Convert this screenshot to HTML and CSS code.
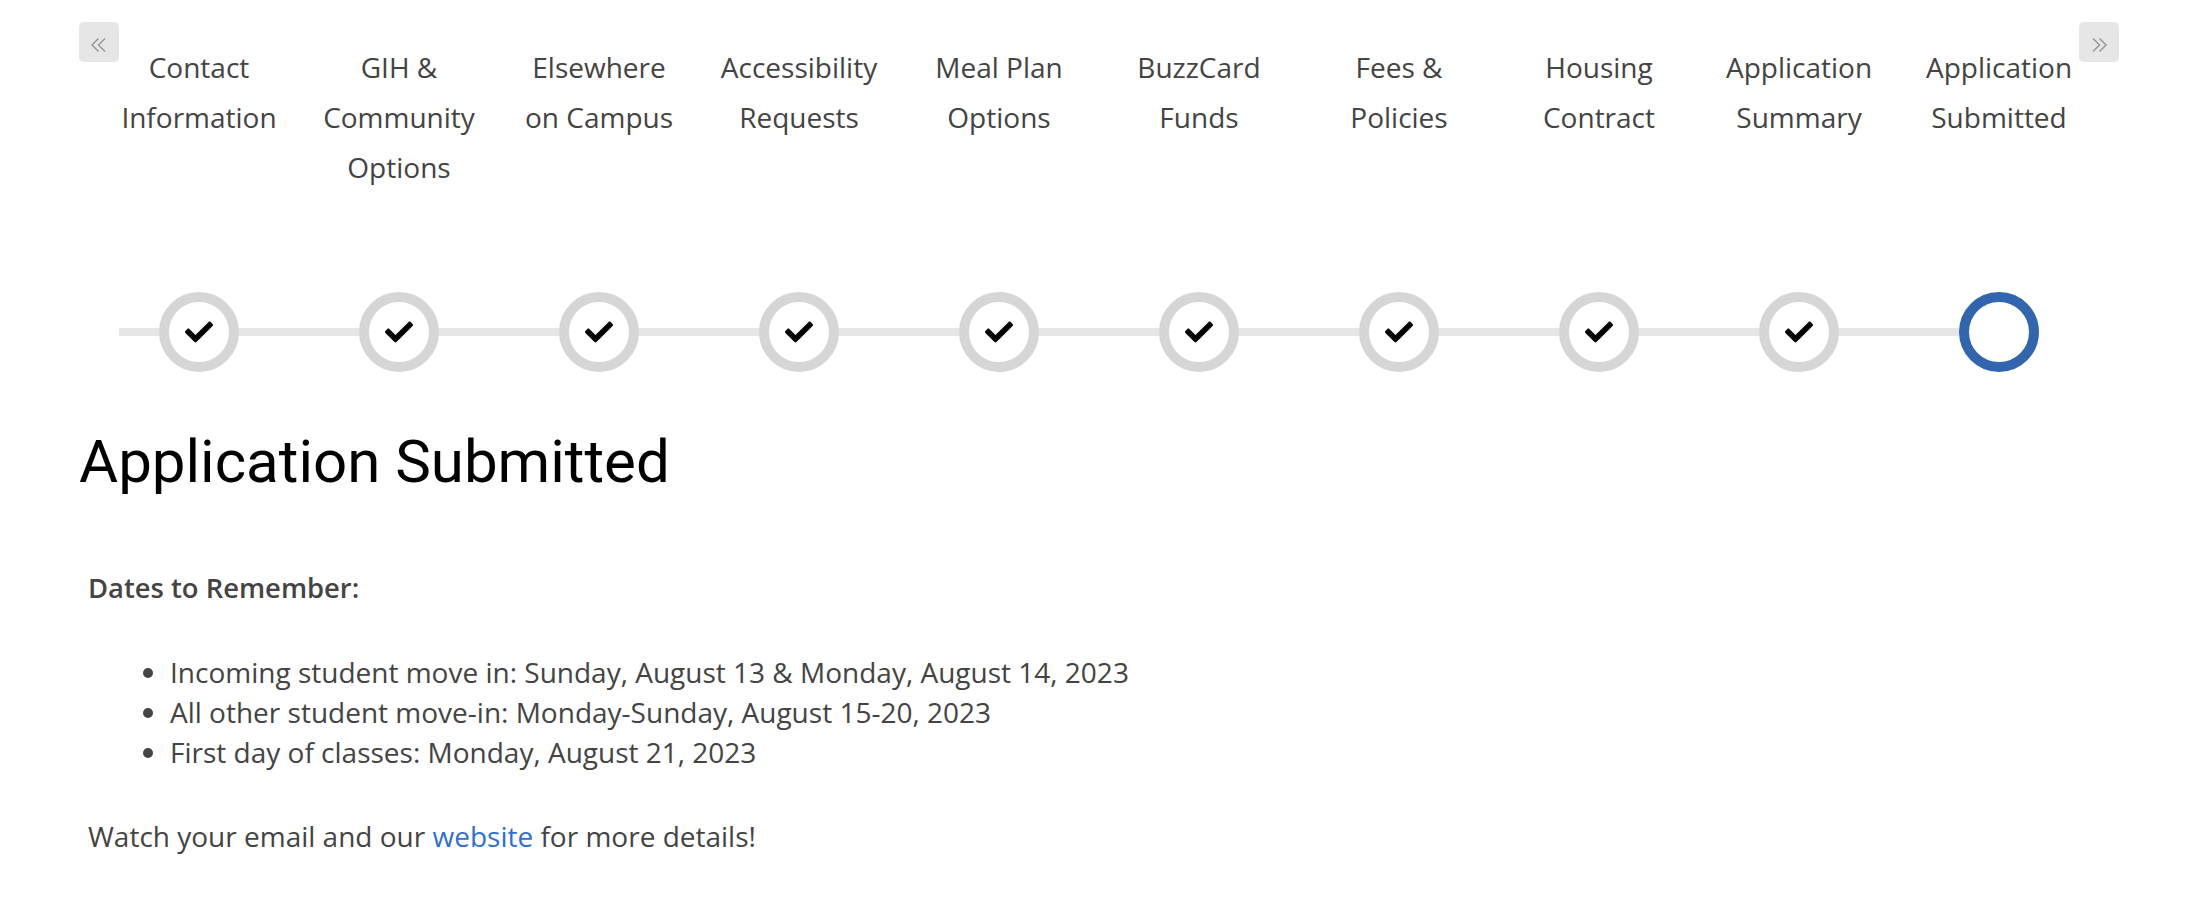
FILE: index.html
```html
<!DOCTYPE html>
<html lang="en">
<head>
  <meta charset="UTF-8">
  <meta name="viewport" content="width=device-width, initial-scale=1.0">
  <link rel="stylesheet" href="styles.css">
</head>
<body>
  <div class="stepper">
    <button class="nav-btn" aria-label="Previous">
      <svg width="18" height="16" viewBox="0 0 18 16"><polyline points="8.5,1.5 2,8 8.5,14.5" /><polyline points="15,1.5 8.5,8 15,14.5" /></svg>
    </button>
    <div class="steps-viewport">
      <div class="steps">
        <div class="step done">
          <div class="step-label">Contact Information</div>
          <div class="step-circle"><svg class="check" viewBox="0 0 512 512"><path d="M173.9 439.4l-166.4-166.4c-10-10-10-26.2 0-36.2l36.2-36.2c10-10 26.2-10 36.2 0L192 312.7 432.1 72.6c10-10 26.2-10 36.2 0l36.2 36.2c10 10 10 26.2 0 36.2l-294.4 294.4c-10 10-26.2 10-36.2 0z"/></svg></div>
        </div>
        <div class="step done">
          <div class="step-label">GIH &amp; Community Options</div>
          <div class="step-circle"><svg class="check" viewBox="0 0 512 512"><path d="M173.9 439.4l-166.4-166.4c-10-10-10-26.2 0-36.2l36.2-36.2c10-10 26.2-10 36.2 0L192 312.7 432.1 72.6c10-10 26.2-10 36.2 0l36.2 36.2c10 10 10 26.2 0 36.2l-294.4 294.4c-10 10-26.2 10-36.2 0z"/></svg></div>
        </div>
        <div class="step done">
          <div class="step-label">Elsewhere on Campus</div>
          <div class="step-circle"><svg class="check" viewBox="0 0 512 512"><path d="M173.9 439.4l-166.4-166.4c-10-10-10-26.2 0-36.2l36.2-36.2c10-10 26.2-10 36.2 0L192 312.7 432.1 72.6c10-10 26.2-10 36.2 0l36.2 36.2c10 10 10 26.2 0 36.2l-294.4 294.4c-10 10-26.2 10-36.2 0z"/></svg></div>
        </div>
        <div class="step done">
          <div class="step-label">Accessibility Requests</div>
          <div class="step-circle"><svg class="check" viewBox="0 0 512 512"><path d="M173.9 439.4l-166.4-166.4c-10-10-10-26.2 0-36.2l36.2-36.2c10-10 26.2-10 36.2 0L192 312.7 432.1 72.6c10-10 26.2-10 36.2 0l36.2 36.2c10 10 10 26.2 0 36.2l-294.4 294.4c-10 10-26.2 10-36.2 0z"/></svg></div>
        </div>
        <div class="step done">
          <div class="step-label">Meal Plan Options</div>
          <div class="step-circle"><svg class="check" viewBox="0 0 512 512"><path d="M173.9 439.4l-166.4-166.4c-10-10-10-26.2 0-36.2l36.2-36.2c10-10 26.2-10 36.2 0L192 312.7 432.1 72.6c10-10 26.2-10 36.2 0l36.2 36.2c10 10 10 26.2 0 36.2l-294.4 294.4c-10 10-26.2 10-36.2 0z"/></svg></div>
        </div>
        <div class="step done">
          <div class="step-label">BuzzCard Funds</div>
          <div class="step-circle"><svg class="check" viewBox="0 0 512 512"><path d="M173.9 439.4l-166.4-166.4c-10-10-10-26.2 0-36.2l36.2-36.2c10-10 26.2-10 36.2 0L192 312.7 432.1 72.6c10-10 26.2-10 36.2 0l36.2 36.2c10 10 10 26.2 0 36.2l-294.4 294.4c-10 10-26.2 10-36.2 0z"/></svg></div>
        </div>
        <div class="step done">
          <div class="step-label">Fees &amp; Policies</div>
          <div class="step-circle"><svg class="check" viewBox="0 0 512 512"><path d="M173.9 439.4l-166.4-166.4c-10-10-10-26.2 0-36.2l36.2-36.2c10-10 26.2-10 36.2 0L192 312.7 432.1 72.6c10-10 26.2-10 36.2 0l36.2 36.2c10 10 10 26.2 0 36.2l-294.4 294.4c-10 10-26.2 10-36.2 0z"/></svg></div>
        </div>
        <div class="step done">
          <div class="step-label">Housing Contract</div>
          <div class="step-circle"><svg class="check" viewBox="0 0 512 512"><path d="M173.9 439.4l-166.4-166.4c-10-10-10-26.2 0-36.2l36.2-36.2c10-10 26.2-10 36.2 0L192 312.7 432.1 72.6c10-10 26.2-10 36.2 0l36.2 36.2c10 10 10 26.2 0 36.2l-294.4 294.4c-10 10-26.2 10-36.2 0z"/></svg></div>
        </div>
        <div class="step done">
          <div class="step-label">Application Summary</div>
          <div class="step-circle"><svg class="check" viewBox="0 0 512 512"><path d="M173.9 439.4l-166.4-166.4c-10-10-10-26.2 0-36.2l36.2-36.2c10-10 26.2-10 36.2 0L192 312.7 432.1 72.6c10-10 26.2-10 36.2 0l36.2 36.2c10 10 10 26.2 0 36.2l-294.4 294.4c-10 10-26.2 10-36.2 0z"/></svg></div>
        </div>
        <div class="step current">
          <div class="step-label">Application Submitted</div>
          <div class="step-circle"></div>
        </div>
      </div>
    </div>
    <button class="nav-btn" aria-label="Next">
      <svg width="18" height="16" viewBox="0 0 18 16"><polyline points="3,1.5 9.5,8 3,14.5" /><polyline points="9.5,1.5 16,8 9.5,14.5" /></svg>
    </button>
  </div>

  <div class="content">
    <h1>Application Submitted</h1>
    <div class="message">
      <p class="dates-title">Dates to Remember:</p>
      <ul>
        <li>Incoming student move in: Sunday, August 13 &amp; Monday, August 14, 2023</li>
        <li>All other student move-in: Monday-Sunday, August 15-20, 2023</li>
        <li>First day of classes: Monday, August 21, 2023</li>
      </ul>
      <p>Watch your email and our <a href="#">website</a> for more details!</p>
    </div>
  </div>
</body>
</html>
```

FILE: styles.css
```css
body {
  margin: 0;
  background-color: #fff;
  font-family: "Open Sans", Arial, sans-serif;
  color: #444;
}

.stepper {
  display: flex;
  align-items: flex-start;
  padding: 22px 79px 0;
}

.nav-btn {
  flex: none;
  width: 40px;
  height: 40px;
  padding: 5px 0 0;
  border: none;
  border-radius: 5px;
  background-color: #e6e6e6;
  display: flex;
  align-items: center;
  justify-content: center;
  cursor: pointer;
}

.nav-btn svg {
  fill: none;
  stroke: #999;
  stroke-width: 1.5;
}

.steps-viewport {
  flex: 1;
  overflow: hidden;
  padding-top: 20px;
}

.steps {
  display: flex;
  margin-left: -20px;
}

.step {
  flex: none;
  width: 200px;
  display: flex;
  flex-direction: column;
  align-items: center;
  position: relative;
}

.step::before {
  content: "";
  position: absolute;
  left: 0;
  right: 0;
  top: 286px;
  height: 8px;
  background-color: #e6e6e6;
}

.step:last-child::before {
  right: 50%;
}

.step-label {
  width: 160px;
  height: 250px;
  font-size: 28px;
  line-height: 50px;
  text-align: center;
  color: #444;
}

.step-circle {
  position: relative;
  width: 80px;
  height: 80px;
  box-sizing: border-box;
  border: 10px solid #d6d6d6;
  border-radius: 50%;
  background-color: #fff;
  display: flex;
  align-items: center;
  justify-content: center;
}

.step.current .step-circle {
  border-color: #3166ae;
}

.check {
  width: 28px;
  height: 28px;
  fill: #000;
}

.content {
  padding: 0 79px;
}

h1 {
  margin: 54px 0 0;
  font-family: Roboto, Arial, sans-serif;
  font-weight: 400;
  font-size: 60px;
  line-height: 72px;
  color: #000;
}

.message {
  margin-top: 70px;
  padding: 0 9px;
  font-size: 28px;
  line-height: 40px;
}

.message p {
  margin: 0;
}

.dates-title {
  font-size: 27.4px;
  font-weight: 600;
}

.message ul {
  margin: 44px 0;
  padding-left: 82px;
}

.message a {
  color: #2f6fd6;
  text-decoration: none;
}
```
